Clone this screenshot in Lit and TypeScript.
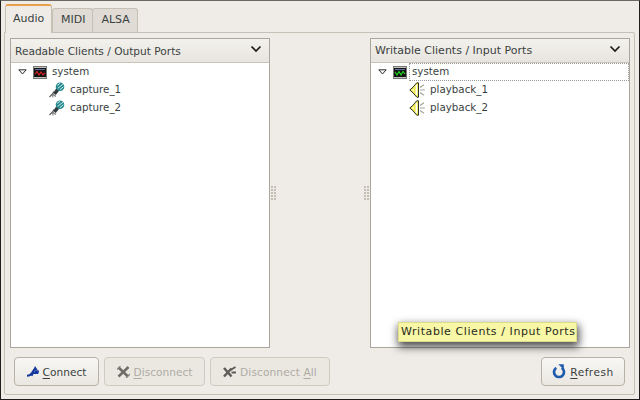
import { LitElement, html, css, svg } from "lit";
import { customElement } from "lit/decorators.js";

const mic = svg`<svg width="16" height="16" viewBox="0 0 16 16"><path d="M0.5 15 L3.5 12 L5 9.5" fill="none" stroke="#5a5a56" stroke-width="1.2"/><path d="M3.5 12 L4 15.5 M3.5 12 L7 14.5" stroke="#77777a" stroke-width="1.1"/><path d="M4.2 11 L7.5 6 L10.5 8.3 L6.8 13 Z" fill="#333a3e"/><circle cx="11" cy="4.8" r="4.3" fill="#2a8a90"/><path d="M8.2 3.5 L11 1.3 M8.8 6.3 L13.8 2.3 M11 7.6 L14.4 4.8" stroke="#c4ece8" stroke-width="1"/></svg>`;

const spk = svg`<svg width="16" height="16" viewBox="0 0 16 16"><path d="M0.8 8 L4 5.2 L7.8 0.8 H9.5 V15.2 H7.8 L4 10.8 Z" fill="#eeea50" stroke="#2e2e26" stroke-width="1"/><path d="M2.2 8 L4.8 6.2 V9.8 Z" fill="#fbf9a8"/><path d="M7.4 3 V13" stroke="#fff" stroke-width="1.6"/><path d="M11 5.5 L15 2.8 M11 8 H15.8 M11 10.5 L15 13.2" stroke="#a4a49c" stroke-width="1.2"/></svg>`;

const monitor = (stroke: string, path: string) => svg`<svg width="14" height="13" viewBox="0 0 14 13"><rect width="14" height="13" fill="#7a7a76"/><rect x="1" y="1" width="12" height="11" fill="#c2c2bc"/><rect x="1" y="2" width="12" height="9" fill="#141414"/><rect x="2" y="3" width="10" height="1" fill="#5f6f9f"/><path d="${path}" fill="none" stroke="${stroke}" stroke-width="1.1"/></svg>`;

const chevron = svg`<svg class="chev" width="12" height="8" viewBox="0 0 12 8"><path d="M1.5 1.5 L6 6 L10.5 1.5" fill="none" stroke="#1c1c1c" stroke-width="1.7"/></svg>`;
const expander = svg`<svg width="9" height="6" viewBox="0 0 9 6"><path d="M0.8 0.8 H8.2 L4.5 5 Z" fill="#f4f4f2" stroke="#2e2e2e" stroke-width="1"/></svg>`;

const iconConnect = svg`<svg width="12" height="11" viewBox="0 0 12 11"><path d="M0 9.8 C2.5 9.8 3.8 9 5 7 C6 5 7 3.5 9 2.5" fill="none" stroke="#15389c" stroke-width="2.1"/><path d="M4.5 9.8 L6 7 H10.5 L11 5.5 H7.5" fill="none" stroke="#15389c" stroke-width="1.9"/><path d="M8 0 L11 4.5 L6 4.5 Z" fill="#15389c"/></svg>`;
const iconDisc = svg`<svg width="13" height="12" viewBox="0 0 13 12"><path d="M1.5 1.5 L11 10.5 M11.5 1 L1.5 10.5" stroke="#6e6c67" stroke-width="2.5"/><path d="M0 3.5 L3.5 0 M9 12 L13 8" stroke="#85837e" stroke-width="1.3"/></svg>`;
const iconDiscAll = svg`<svg width="13" height="12" viewBox="0 0 13 12"><path d="M1 2 L8.5 10.5 M8.5 2.5 L1 10.5" stroke="#5e5c58" stroke-width="2.5"/><path d="M7.5 4 L12.5 1 M8.5 6.5 H13" stroke="#5e5c58" stroke-width="2"/></svg>`;
const iconRefresh = svg`<svg width="14" height="15" viewBox="0 0 14 15"><path d="M4.3 3.8 A5 5 0 1 0 9.7 3.8" fill="none" stroke="#1f5cad" stroke-width="2.7"/><path d="M6.3 0.3 L11.8 0.3 L11.8 5.8 Z" fill="#1f5cad"/></svg>`;

@customElement("app-root")
export class AppRoot extends LitElement {
  static styles = css`
    :host {
      display: block;
      width: 640px;
      height: 400px;
      font-family: "DejaVu Sans", sans-serif;
      font-size: 11px;
      color: #3a3f41;
    }
    .win {
      position: relative;
      box-sizing: border-box;
      width: 640px;
      height: 400px;
      background: #efece7;
      border: 1px solid #1e1e1c;
      border-top-color: #6a6864;
      padding: 3px 4px 4px 3px;
      display: flex;
      flex-direction: column;
    }
    .tabs {
      display: flex;
      height: 28px;
      flex: none;
      padding-left: 1px;
      position: relative;
      z-index: 1;
    }
    .tab {
      box-sizing: border-box;
      height: 24px;
      margin-top: 4px;
      padding: 4px 7px 0 8px;
      background: #e0dcd5;
      border: 1px solid #c6c1b7;
      border-bottom: none;
      border-radius: 3px 3px 0 0;
      margin-right: -1px;
    }
    .tab.active {
      height: 29px;
      margin-top: 0;
      padding: 6px 0 0 7px;
      background: #efece7;
      border-top: 2px solid #e8a04c;
      width: 47px;
      margin-right: 0;
    }
    .note {
      flex: 1;
      border: 1px solid #c6c1b7;
      border-radius: 0 2px 2px 2px;
      padding: 5px 4px 9px 5px;
      display: flex;
      flex-direction: column;
      gap: 9px;
      min-height: 0;
    }
    .panes {
      height: 310px;
      flex: none;
      display: grid;
      grid-template-columns: 260px 1fr 260px;
    }
    .list {
      box-sizing: border-box;
      background: #fff;
      border: 1px solid #aaa69c;
      display: flex;
      flex-direction: column;
      min-width: 0;
    }
    .head {
      box-sizing: border-box;
      height: 24px;
      flex: none;
      background: linear-gradient(#f3f1ed, #e8e5df);
      border-bottom: 1px solid #c8c4bb;
      display: flex;
      align-items: center;
      justify-content: space-between;
      padding: 0 8px 0 4px;
    }
    .head.l { padding-right: 7px; }
    .head.l span { font-size: 10.6px; }
    .chev { display: block; margin-bottom: 4px; }
    .row {
      box-sizing: border-box;
      height: 18px;
      display: flex;
      align-items: center;
      white-space: nowrap;
      font-size: 10.3px;
    }
    .row.parent { padding-left: 7px; }
    .row.child { padding-left: 38px; }
    .exp { width: 15px; display: flex; }
    .m { display: flex; }
    .ico { width: 16px; height: 16px; margin-right: 5px; }
    .txt { margin-bottom: 2px; }
    .lab {
      box-sizing: border-box;
      height: 18px;
      line-height: 15px;
      margin-left: 2px;
      padding: 0 2px;
      border: 1px solid transparent;
    }
    .focus .lab {
      flex: 1;
      border: 1px dotted #9a9a9a;
    }
    .mid { display: flex; justify-content: space-between; align-items: center; }
    .grip {
      width: 5px;
      height: 15px;
      background-image: radial-gradient(circle at 1px 1px, #c2beb4 0.8px, transparent 1px);
      background-size: 3px 3px;
      margin: 0 1px;
    }
    .btns { display: flex; gap: 5px; align-items: center; padding: 0 5px 0 4px; font-size: 10.6px; }
    .btn {
      box-sizing: border-box;
      height: 29px;
      border: 1px solid #b7b2a5;
      border-radius: 4px;
      background: linear-gradient(#f8f7f5, #eae7e1);
      display: flex;
      align-items: center;
      justify-content: center;
      gap: 4px;
      color: #3a3f41;
    }
    .btn.dis {
      background: #ebe8e2;
      border-color: #cfcbc0;
      color: #aeaba4;
    }
    .btn.c { width: 85px; }
    .btn.d { width: 101px; }
    .btn.a { width: 120px; }
    .btn.a span { letter-spacing: 0.1px; }
    .btn.r { width: 84px; margin-left: auto; }
    .btn.r span { letter-spacing: 0.5px; }
    u { text-underline-offset: 2px; }
    .tip {
      position: absolute;
      left: 397px;
      top: 321px;
      box-sizing: border-box;
      width: 179px;
      height: 20px;
      padding: 2px 2px;
      white-space: nowrap;
      letter-spacing: 0.58px;
      background: #f7f7a6;
      border: 1px solid #dcdc8c;
      color: #2a2a20;
      box-shadow: 1px 4px 9px 1px rgba(0, 0, 0, 0.7);
    }
  `;

  private tree(title: string, rows: string[], icon: unknown, mon: unknown, focus: boolean, cls: string) {
    return html`<div class="list">
      <div class="head ${cls}"><span>${title}</span>${chevron}</div>
      <div class="rows">
        <div class="row parent ${focus ? "focus" : ""}">
          <span class="exp">${expander}</span><span class="m">${mon}</span><span class="lab">system</span>
        </div>
        ${rows.map(
          (r) => html`<div class="row child"><span class="ico">${icon}</span><span class="txt">${r}</span></div>`
        )}
      </div>
    </div>`;
  }

  render() {
    return html`<div class="win">
      <div class="tabs">
        <div class="tab active">Audio</div>
        <div class="tab">MIDI</div>
        <div class="tab">ALSA</div>
      </div>
      <div class="note">
        <div class="panes">
          ${this.tree("Readable Clients / Output Ports", ["capture_1", "capture_2"], mic, monitor("#e82020", "M2 8 L4 5.5 L6 9 L8 6 L10 9 L12 7"), false, "l")}
          <div class="mid"><span class="grip"></span><span class="grip"></span></div>
          ${this.tree("Writable Clients / Input Ports", ["playback_1", "playback_2"], spk, monitor("#20e020", "M2 6 L4 9 L6 5.5 L8 9 L10 5.5 L12 8"), true, "r")}
        </div>
        <div class="btns">
          <div class="btn c">${iconConnect}<span><u>C</u>onnect</span></div>
          <div class="btn d dis">${iconDisc}<span><u>D</u>isconnect</span></div>
          <div class="btn a dis">${iconDiscAll}<span>Disconnect <u>A</u>ll</span></div>
          <div class="btn r">${iconRefresh}<span><u>R</u>efresh</span></div>
        </div>
      </div>
      <div class="tip">Writable Clients / Input Ports</div>
    </div>`;
  }
}
